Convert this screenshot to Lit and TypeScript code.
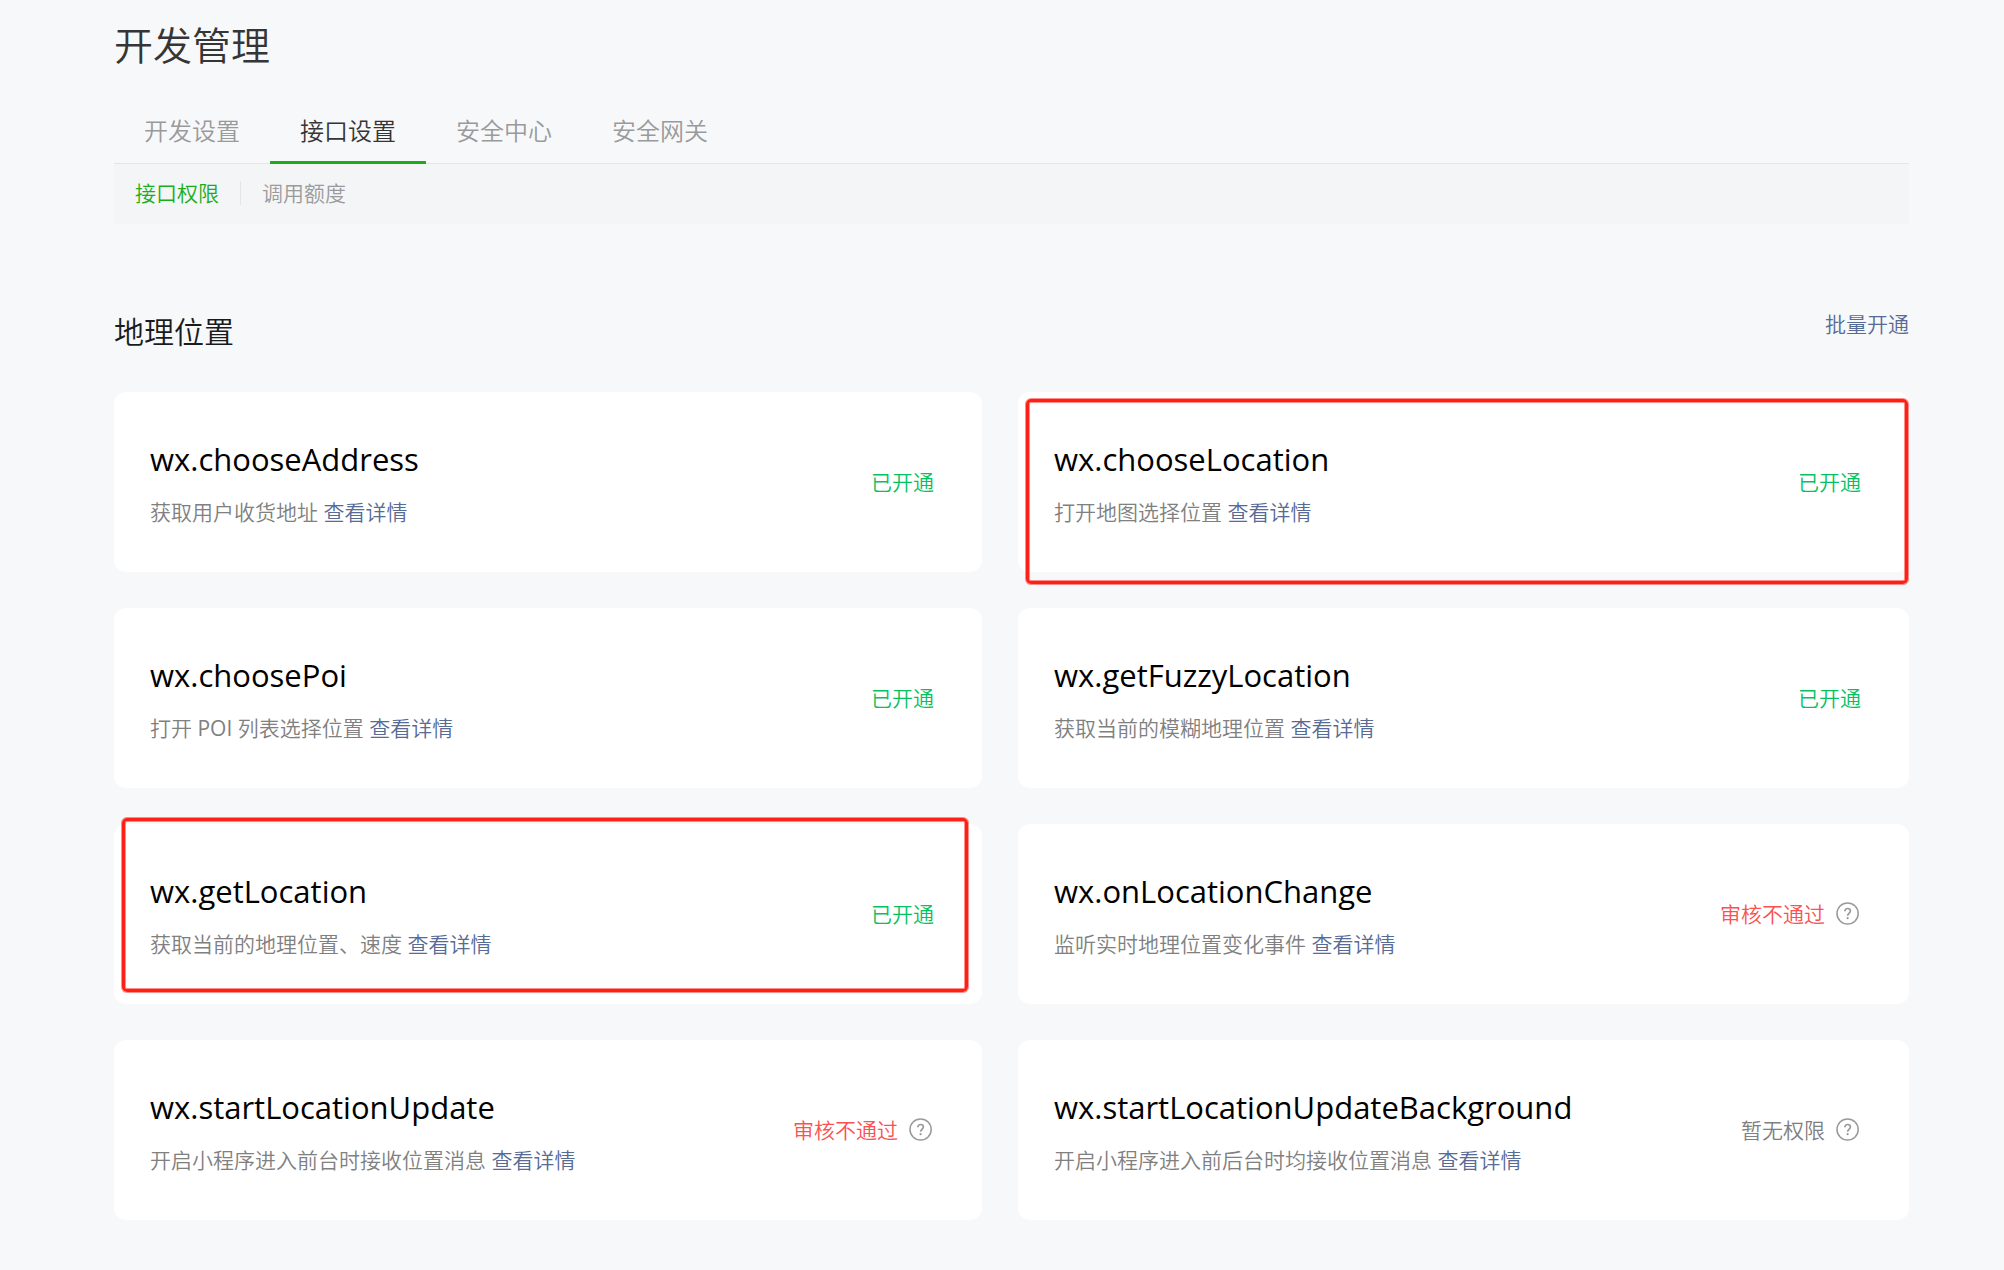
import { LitElement, html, css, nothing } from "lit";
import { customElement, property } from "lit/decorators.js";
import { classMap } from "lit/directives/class-map.js";

type Status = "open" | "rejected" | "none";

interface Api {
  name: string;
  desc: string;
  status: Status;
  mark?: "low" | "high";
}

const STATUS_TEXT: Record<Status, string> = {
  open: "已开通",
  rejected: "审核不通过",
  none: "暂无权限",
};

const APIS: Api[] = [
  { name: "wx.chooseAddress", desc: "获取用户收货地址", status: "open" },
  { name: "wx.chooseLocation", desc: "打开地图选择位置", status: "open", mark: "low" },
  { name: "wx.choosePoi", desc: "打开 POI 列表选择位置", status: "open" },
  { name: "wx.getFuzzyLocation", desc: "获取当前的模糊地理位置", status: "open" },
  { name: "wx.getLocation", desc: "获取当前的地理位置、速度", status: "open", mark: "high" },
  { name: "wx.onLocationChange", desc: "监听实时地理位置变化事件", status: "rejected" },
  { name: "wx.startLocationUpdate", desc: "开启小程序进入前台时接收位置消息", status: "rejected" },
  { name: "wx.startLocationUpdateBackground", desc: "开启小程序进入前后台时均接收位置消息", status: "none" },
];

/** Sets Latin words in the regular weight, beside the lighter Chinese text. */
const mixed = (text: string) =>
  text.split(/([A-Za-z]+)/).map((part, i) => (i % 2 ? html`<span class="latin">${part}</span>` : part));

@customElement("api-card")
export class ApiCard extends LitElement {
  @property({ attribute: false }) api!: Api;

  static styles = css`
    :host {
      display: block;
      position: relative;
    }
    .card {
      display: flex;
      align-items: center;
      justify-content: space-between;
      gap: 24px;
      padding: 42px 48px 42px 36px;
      border-radius: 12px;
      background: #fff;
    }
    .name {
      margin: 0 0 9px;
      font-size: 31px;
      font-weight: 400;
      line-height: 51px;
      color: #000;
    }
    .desc {
      margin: 0;
      font-size: 21px;
      line-height: 36px;
      color: #808080;
    }
    .latin {
      font-weight: 400;
    }
    .more {
      color: #576b95;
      text-decoration: none;
    }
    .status {
      display: flex;
      align-items: center;
      gap: 10px;
      flex: none;
      font-size: 21px;
      line-height: 36px;
    }
    .open {
      color: #07c160;
    }
    .rejected {
      color: #fa5151;
    }
    .none {
      color: #808080;
    }
    .help {
      display: block;
      padding: 0;
      border: 0;
      background: none;
      color: #9a9a9a;
      cursor: pointer;
    }
    .help svg {
      display: block;
    }
    .mark {
      position: absolute;
      border: 3px solid #ff2015;
      border-radius: 5px;
      box-shadow: 0 0 0 1px rgba(255, 32, 21, 0.5), inset 0 0 0 1px rgba(255, 32, 21, 0.5);
      pointer-events: none;
    }
    .low {
      inset: 7px 1px -12px 8px;
    }
    .high {
      inset: -6px 14px 12px 8px;
    }
  `;

  render() {
    const { name, desc, status, mark } = this.api;
    return html`
      <article class="card">
        <div>
          <h3 class="name">${name}</h3>
          <p class="desc">${mixed(desc)} <a class="more" href="#">查看详情</a></p>
        </div>
        <div class=${classMap({ status: true, [status]: true })}>
          <span>${STATUS_TEXT[status]}</span>
          ${status === "open"
            ? nothing
            : html`<button class="help" type="button" aria-label="说明">
                <svg width="26" height="26" viewBox="0 0 26 26" fill="none" stroke="currentColor">
                  <circle cx="12.600" cy="12.500" r="10.6" stroke-width="1.5" />
                  <path d="M9.8 10.2C9.8 8.600 11 7.500 12.600 7.500s2.800 1.100 2.800 2.600c0 1.200-.7 1.800-1.500 2.400-.9.700-1.300 1.100-1.300 2.300" stroke-width="1.700" />
                  <circle cx="12.600" cy="17.200" r="1.100" fill="currentColor" stroke="none" />
                </svg>
              </button>`}
        </div>
      </article>
      ${mark ? html`<div class=${classMap({ mark: true, [mark]: true })}></div>` : nothing}
    `;
  }
}

@customElement("app-root")
export class AppRoot extends LitElement {
  static styles = css`
    :host {
      display: block;
      box-sizing: border-box;
      min-height: 100vh;
      padding: 15px 95px 50px 114px;
      background: #f7f8fa;
      font-family: "Open Sans", "Noto Sans CJK SC", sans-serif;
      font-weight: 350;
    }
    .title {
      margin: 0;
      font-size: 39px;
      font-weight: 350;
      line-height: 60px;
      color: #353535;
    }
    .tabs {
      display: flex;
      margin-top: 24px;
      border-bottom: 1px solid #e4e5e7;
    }
    .tab {
      margin-bottom: -1px;
      padding: 15px 30px 14px;
      border-bottom: 3px solid transparent;
      font-size: 24px;
      line-height: 33px;
      color: #9a9a9a;
      text-decoration: none;
    }
    .tab.on {
      border-color: #1aad19;
      color: #353535;
    }
    .subtabs {
      display: flex;
      align-items: flex-start;
      padding: 17px 0 19px;
      background: #f4f5f7;
    }
    .subtab {
      padding: 0 21px;
      font-size: 21px;
      line-height: 24px;
      color: #9a9a9a;
      text-decoration: none;
    }
    .subtab + .subtab {
      border-left: 1px solid #e4e5e7;
    }
    .subtab.on {
      color: #1aad19;
    }
    .head {
      display: flex;
      align-items: flex-start;
      justify-content: space-between;
      margin: 84px 0 36px;
    }
    .section {
      margin: 0;
      font-size: 30px;
      font-weight: 350;
      line-height: 48px;
      color: #1a1b1c;
    }
    .batch {
      font-size: 21px;
      line-height: 33px;
      color: #576b95;
      text-decoration: none;
    }
    .grid {
      display: grid;
      grid-template-columns: 868fr 891fr;
      gap: 36px;
    }
  `;

  render() {
    return html`
      <h1 class="title">开发管理</h1>
      <nav class="tabs">
        ${["开发设置", "接口设置", "安全中心", "安全网关"].map(
          (t, i) => html`<a class=${classMap({ tab: true, on: i === 1 })} href="#">${t}</a>`
        )}
      </nav>
      <nav class="subtabs">
        ${["接口权限", "调用额度"].map(
          (t, i) => html`<a class=${classMap({ subtab: true, on: i === 0 })} href="#">${t}</a>`
        )}
      </nav>
      <div class="head">
        <h2 class="section">地理位置</h2>
        <a class="batch" href="#">批量开通</a>
      </div>
      <div class="grid">${APIS.map((a) => html`<api-card .api=${a}></api-card>`)}</div>
    `;
  }
}
